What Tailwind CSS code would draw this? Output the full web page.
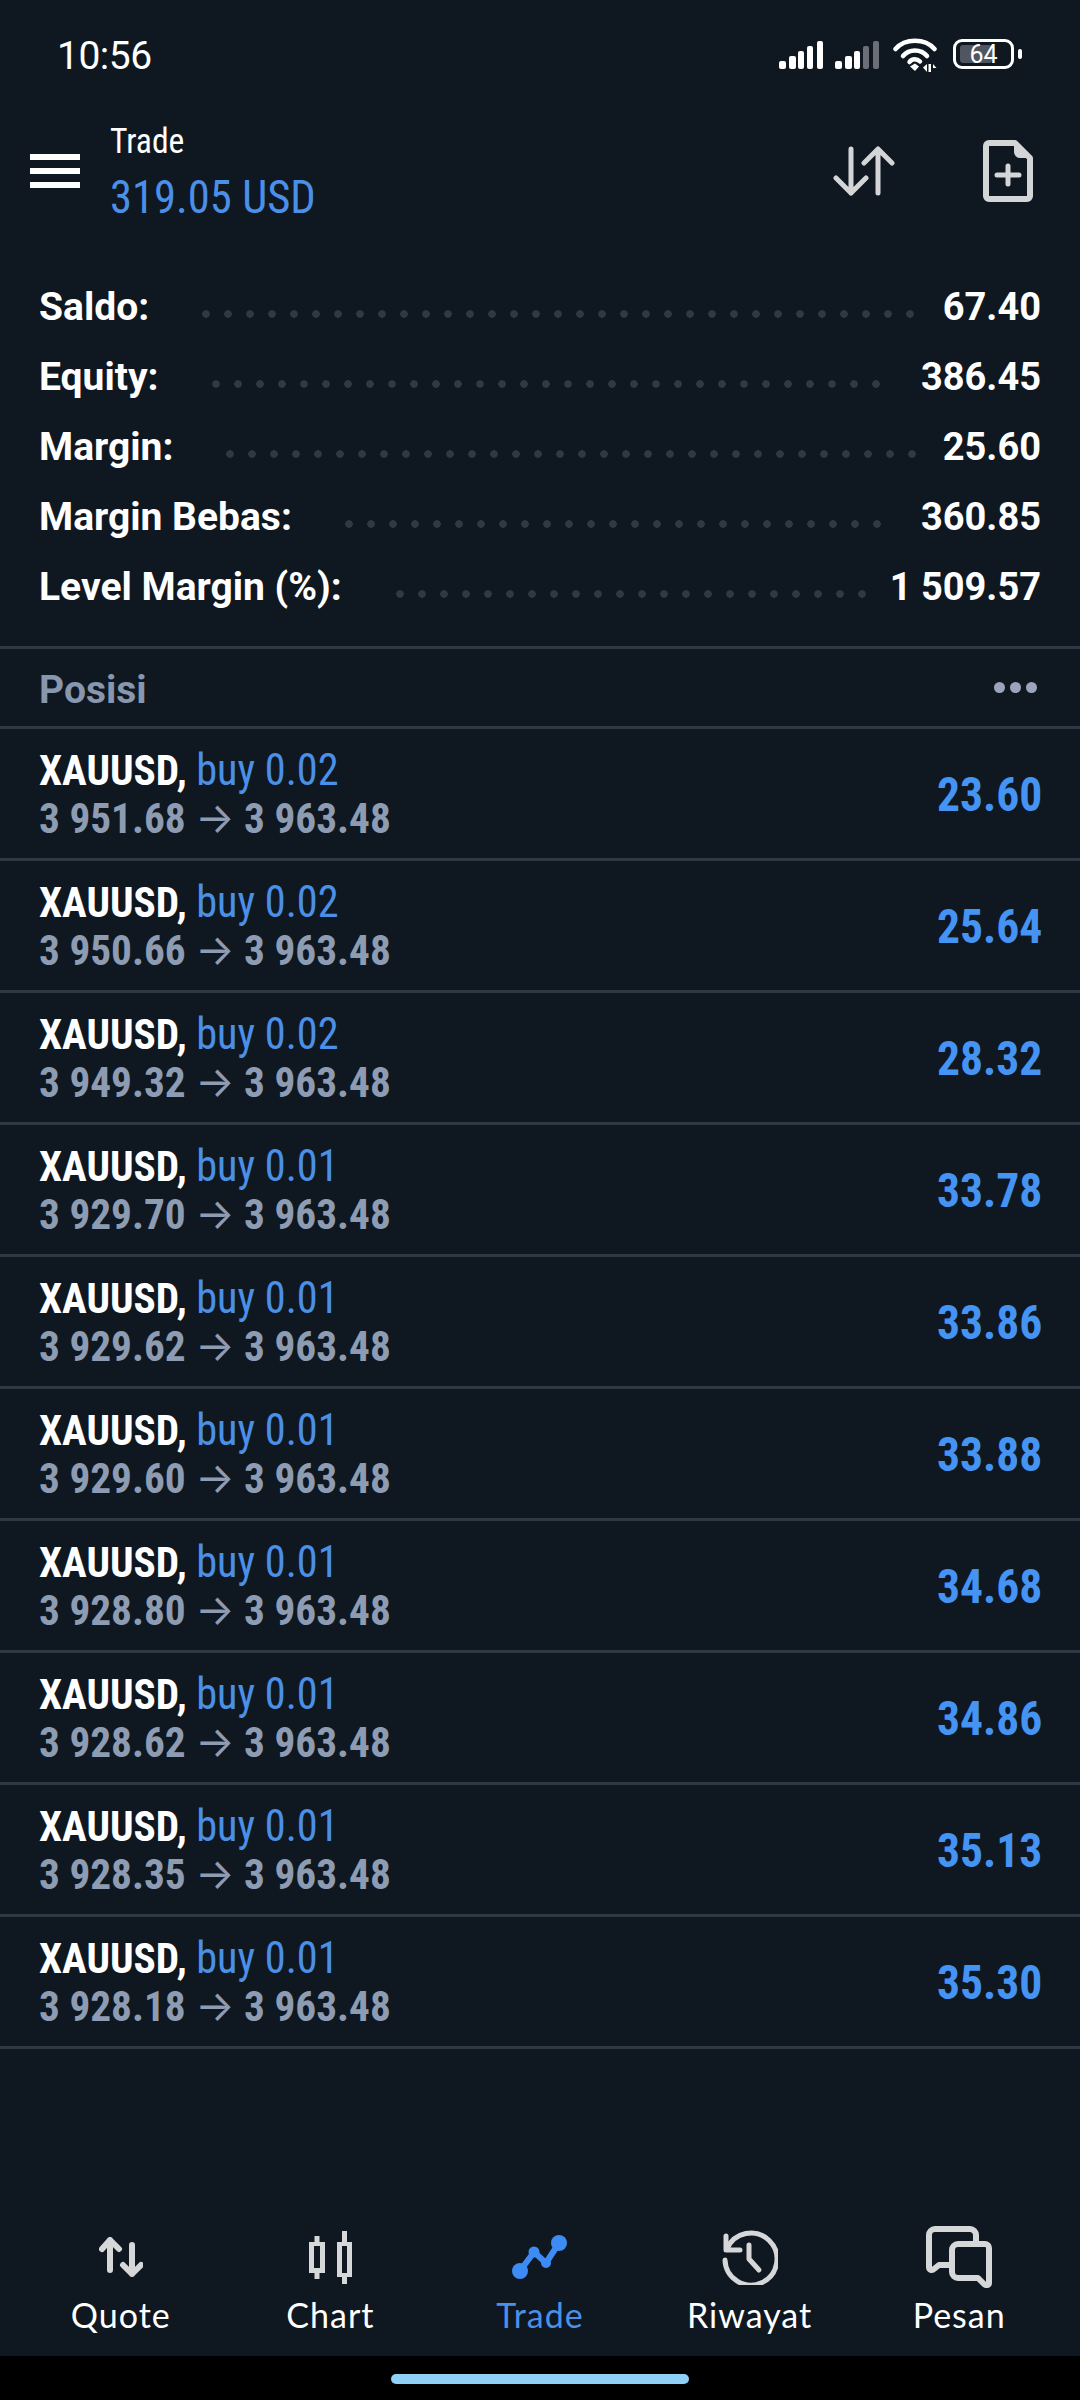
<!DOCTYPE html>
<html lang="id">
<head>
    <meta charset="UTF-8">
    <meta name="viewport" content="width=device-width, initial-scale=1.0">
    <title>Trade</title>
    <script src="https://cdn.jsdelivr.net/npm/@tailwindcss/browser@4"></script>
</head>
<body class="bg-[#0f1820] text-white font-['Roboto',sans-serif]">
<div class="w-[1080px] h-[2400px] flex flex-col overflow-hidden">

    <!-- status bar -->
    <div class="h-[82px] shrink-0 flex items-start justify-between pl-[57px] pr-[58px] pt-[33px]">
        <span class="text-[39px] leading-[46px] tracking-[-0.5px]">10:56</span>
        <div class="flex items-start mt-[-3px]">
            <svg class="mt-[11px]" width="44" height="28" viewBox="0 0 44 28" fill="#fff"><rect x="0" y="20" width="7" height="8" rx="2"/><rect x="10" y="15" width="7" height="13" rx="2"/><rect x="19" y="10" width="6" height="18" rx="2"/><rect x="28" y="5" width="6" height="23" rx="2"/><rect x="38" y="0" width="6" height="28" rx="2"/></svg>
            <svg class="mt-[11px] ml-[12px]" width="44" height="28" viewBox="0 0 44 28" fill="#fff"><rect x="0" y="20" width="7" height="8" rx="2"/><rect x="10" y="15" width="7" height="13" rx="2"/><rect x="19" y="10" width="6" height="18" rx="2"/><rect x="28" y="5" width="6" height="23" rx="2" fill="#6b7078"/><rect x="38" y="0" width="6" height="28" rx="2" fill="#6b7078"/></svg>
            <svg class="mt-[8px] ml-[14px]" width="44" height="34" viewBox="0 0 44 34" fill="none" stroke="#fff" stroke-width="4.500" stroke-linecap="round"><path d="M2.500 11C12 0 32 0 41.500 11"/><path d="M10 18C16 10.500 28 10.500 34 18"/><path d="M16.500 24C19 20.500 24 20.500 27 23.500"/><path d="M22 33l-5-4.500 5-3 4 3z" fill="#fff" stroke="none"/><path d="M30 29.500l4-3.500v8zM35.500 26h2.500v8h-2.500zM40 26l3.500 4H40z" fill="#fff" stroke="none"/></svg>
            <div class="mt-[9px] ml-[16px] flex items-center gap-[4px]">
                <div class="relative w-[61px] h-[30px] rounded-[9px] border-[3px] border-white flex items-center justify-center">
                    <div class="absolute left-[4px] top-[3px] bottom-[3px] w-[32px] rounded-[3px] bg-[#50565f]"></div>
                    <span class="relative text-[25px] leading-none">64</span>
                </div>
                <div class="w-[4px] h-[10px] bg-white rounded-[2px]"></div>
            </div>
        </div>
    </div>

    <!-- top bar -->
    <div class="h-[156px] shrink-0 flex items-center pl-[30px] pr-[47px] pt-[22px]">
        <div class="w-[50px] flex flex-col gap-[8px]">
            <div class="h-[6px] bg-white"></div>
            <div class="h-[6px] bg-white"></div>
            <div class="h-[6px] bg-white"></div>
        </div>
        <div class="ml-[30px] mt-[4px] flex flex-col items-start gap-[4px] font-stretch-condensed">
            <span class="text-[35px] leading-[44px] scale-x-96 origin-left">Trade</span>
            <span class="text-[46px] leading-[58px] scale-x-97 origin-left text-[#4a90e8]">319.05 USD</span>
        </div>
        <div class="ml-auto flex items-center gap-[88px]">
            <svg width="62" height="50" viewBox="0 0 62 50" fill="none" stroke="#d4d5d7" stroke-width="5" stroke-linecap="round" stroke-linejoin="round"><path d="M18 3v44M3 32l15 15 15-15"/><path d="M45 47V3M31 17L45 3l14 14"/></svg>
            <svg width="50" height="62" viewBox="0 0 50 62" fill="none"><path d="M6 3h26l15 15v38a3 3 0 0 1-3 3H6a3 3 0 0 1-3-3V6a3 3 0 0 1 3-3z" stroke="#d4d5d7" stroke-width="6" stroke-linejoin="round"/><path d="M31 3v9a6 6 0 0 0 6 6h10z" fill="#d4d5d7"/><path d="M25 26v18M14 35h22" stroke="#d4d5d7" stroke-width="5" stroke-linecap="round"/></svg>
        </div>
    </div>

    <!-- account summary -->
    <div id="summary" class="shrink-0 flex flex-col px-[39px] pt-[34px] h-[408px]"></div>

    <!-- positions header -->
    <div class="h-[83px] shrink-0 flex items-center justify-between pl-[39px] pr-[43px] border-y-[3px] border-[#2d3944]">
        <span class="text-[39px] font-bold text-[#8896ae] mt-[5px]">Posisi</span>
        <div class="flex gap-[5px]">
            <div class="w-[11px] h-[11px] rounded-full bg-[#9aa5bb]"></div>
            <div class="w-[11px] h-[11px] rounded-full bg-[#9aa5bb]"></div>
            <div class="w-[11px] h-[11px] rounded-full bg-[#9aa5bb]"></div>
        </div>
    </div>

    <!-- positions -->
    <div id="rows" class="flex flex-col shrink-0"></div>

    <div class="flex-1"></div>

    <!-- bottom nav -->
    <div class="h-[132px] shrink-0 grid grid-cols-5 px-[16px] pt-[2px] font-['Lato',sans-serif] text-[34px] leading-[40px] tracking-[1px]">
        <div class="flex flex-col items-center">
            <div class="h-[62px] flex items-center">
                <svg width="44" height="40" viewBox="0 0 44 40" fill="none" stroke="#d6d7d9" stroke-width="6" stroke-linecap="round" stroke-linejoin="round"><path d="M11 33V3M3 12l8-9 9 9"/><path d="M33 8v29M24 28l9 9 9-9"/></svg>
            </div>
            <span class="mt-[7px]">Quote</span>
        </div>
        <div class="flex flex-col items-center">
            <div class="h-[62px] flex items-center">
                <svg width="43" height="53" viewBox="0 0 43 53"><path fill="#d6d7d9" fill-rule="evenodd" d="M5.500 5h5v6H16v31h-5.500v6h-5v-6H0V11h5.500zM5 15v22h6V15zM33 0h5v11h5v35h-5v7h-5v-7h-5V11h5zM33 15v27h5V15z"/></svg>
            </div>
            <span class="mt-[7px]">Chart</span>
        </div>
        <div class="flex flex-col items-center text-[#4a90e8]">
            <div class="h-[62px] flex items-center">
                <svg width="56" height="44" viewBox="0 0 56 44" fill="none" stroke="#3d8bf5" stroke-width="6" stroke-linecap="round" stroke-linejoin="round"><path d="M8 36L22 17l12 11L47 8"/><circle cx="8" cy="36" r="8" fill="#3d8bf5" stroke="none"/><circle cx="22" cy="17" r="5.500" fill="#3d8bf5" stroke="none"/><circle cx="34" cy="28" r="5" fill="#3d8bf5" stroke="none"/><circle cx="47" cy="8" r="8" fill="#3d8bf5" stroke="none"/></svg>
            </div>
            <span class="mt-[7px]">Trade</span>
        </div>
        <div class="flex flex-col items-center">
            <div class="h-[62px] flex items-center">
                <svg width="56" height="56" viewBox="0 0 56 56" fill="none" stroke="#d6d7d9" stroke-width="5" stroke-linecap="round" stroke-linejoin="round"><path d="M5 20A26 26 0 1 1 3 31"/><path d="M4 7v14h14"/><path d="M27 16v14l10 11"/></svg>
            </div>
            <span class="mt-[7px]">Riwayat</span>
        </div>
        <div class="flex flex-col items-center">
            <div class="h-[62px] flex items-center">
                <svg width="66" height="62" viewBox="0 0 66 62" fill="none" stroke="#d6d7d9" stroke-width="6" stroke-linecap="round" stroke-linejoin="round"><path d="M50 16V9a6 6 0 0 0-6-6H9a6 6 0 0 0-6 6v32c0 3 3 4 5 2l5-4h13"/><path d="M32 18h27a4 4 0 0 1 4 4v35c0 2-3 3-5 1l-6-6H32a6 6 0 0 1-6-6V24a6 6 0 0 1 6-6z"/></svg>
            </div>
            <span class="mt-[7px]">Pesan</span>
        </div>
    </div>

    <!-- gesture bar -->
    <div class="h-[44px] shrink-0 bg-black flex justify-center pt-[18px]">
        <div class="w-[298px] h-[10px] rounded-full bg-[#8fd0f6]"></div>
    </div>
</div>

<script>
    // first = x of the first dot on the page, count = number of leader dots
    const summary = [
        { label: 'Saldo:', value: '67.40', first: 206, count: 33 },
        { label: 'Equity:', value: '386.45', first: 216, count: 31 },
        { label: 'Margin:', value: '25.60', first: 230, count: 32 },
        { label: 'Margin Bebas:', value: '360.85', first: 349, count: 25 },
        { label: 'Level Margin (%):', value: '1 509.57', first: 400, count: 22 }
    ];
    const positions = [
        ['0.02', '3 951.68', '23.60'], ['0.02', '3 950.66', '25.64'], ['0.02', '3 949.32', '28.32'],
        ['0.01', '3 929.70', '33.78'], ['0.01', '3 929.62', '33.86'], ['0.01', '3 929.60', '33.88'],
        ['0.01', '3 928.80', '34.68'], ['0.01', '3 928.62', '34.86'], ['0.01', '3 928.35', '35.13'],
        ['0.01', '3 928.18', '35.30']
    ];

    document.getElementById('summary').innerHTML = summary.map(s => `
        <div class="h-[70px] shrink-0 flex items-center justify-between relative text-[38px] font-bold">
            <span class="text-[39px]">${s.label}</span>
            <div class="absolute top-[38px] h-[8px] bg-[radial-gradient(circle,#2e3945_3.500px,transparent_4px)] bg-[length:22px_8px]" style="left:${s.first - 50}px; width:${s.count * 22}px"></div>
            <span>${s.value}</span>
        </div>`).join('');

    document.getElementById('rows').innerHTML = positions.map(p => `
        <div class="h-[132px] shrink-0 flex items-center justify-between pl-[39px] pr-[38px] border-b-[3px] border-[#2d3944] font-stretch-condensed">
            <div class="flex flex-col items-start text-[43px] leading-[47px] mt-[2px]">
                <div class="scale-x-96 origin-left whitespace-nowrap"><span class="font-bold">XAUUSD,</span> <span class="text-[44px] text-[#4a90e8]">buy ${p[0]}</span></div>
                <div class="scale-x-96 origin-left font-bold text-[#8d9cb2] whitespace-nowrap">${p[1]} <span class="font-['Inter',sans-serif] font-normal">→</span> 3 963.48</div>
            </div>
            <span class="text-[49px] font-bold text-[#4593f2] scale-x-93 origin-right mt-[2px]">${p[2]}</span>
        </div>`).join('');
</script>
</body>
</html>
